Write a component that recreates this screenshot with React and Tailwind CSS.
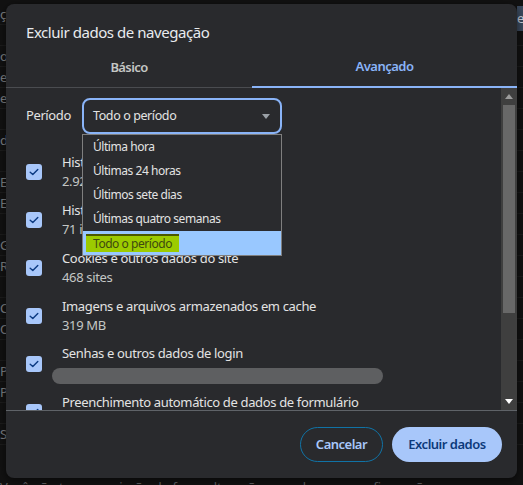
import React from "react";

const font = { fontFamily: '"Noto Sans", "Segoe UI", Arial, sans-serif' };

function Check() {
  return (
    <div className="w-4 h-4 shrink-0 rounded-[3px] bg-[#a8c7fa] flex items-center justify-center">
      <svg width="10" height="8" viewBox="0 0 10 8" fill="none">
        <path d="M1.2 4.2 L3.8 6.6 L8.8 1.4" stroke="#0b3a82" strokeWidth="1.4" strokeLinecap="round" strokeLinejoin="round" />
      </svg>
    </div>
  );
}

function Item({ title, sub, skeleton }) {
  return (
    <div className="flex items-center gap-5 h-[48px]">
      <Check />
      <div className="flex flex-col">
        <div className="text-[13px] leading-[19px] tracking-[-0.35px] text-[#e3e3e3] whitespace-nowrap">{title}</div>
        {sub && <div className="text-[13px] leading-[19px] tracking-[-0.35px] text-[#c4c7c5] whitespace-nowrap">{sub}</div>}
        {skeleton && <div className="ml-[-10px] mt-[5px] w-[331px] h-4 rounded-full bg-[#5e5f61]" />}
      </div>
    </div>
  );
}

export default function App() {
  const bgRows = ["ç", "", "o", "e", "e", "", "d", "", "E", "E", "", "G", "R", "", "C", "O", "", "P", "P", "", "S"];
  return (
    <div className="relative w-[523px] h-[485px] overflow-hidden bg-[#121212]" style={font}>
      {/* background page */}
      <div className="flex flex-col text-[13px] text-[#7d7f82] leading-[21px] pt-[4px]">
        {bgRows.map((r, i) => (
          <div key={i} className="h-[21px] border-b border-[#1c1c1c]">{r}</div>
        ))}
      </div>
      <div className="absolute right-0 top-[6px] w-[6px] h-[25px] bg-[#3b4a5e] text-[13px] text-[#c8d2e0] leading-[25px] overflow-hidden">e</div>
      <div className="absolute left-0 bottom-[-12px] text-[13px] text-[#5f6063] whitespace-nowrap">Você não tem permissão de fazer alterações em algumas configurações</div>

      {/* dialog */}
      <div className="absolute left-[6px] top-[4px] w-[511px] h-[474px] rounded-lg bg-[#292a2d] flex flex-col shadow-[0_2px_8px_rgba(0,0,0,0.6)]">
        <div className="h-[44px] pl-5 pt-[18px] text-[15px] leading-[20px] tracking-[-0.45px] text-[#e8eaed]">Excluir dados de navegação</div>
        <div className="flex h-[40px] border-b border-[#4a4c50]">
          <div className="w-[246px] flex items-center justify-center text-[13px] font-semibold tracking-[-0.6px] text-[#c4c7c5]">Básico</div>
          <div className="flex-1 flex items-center justify-center text-[13px] font-semibold tracking-[-0.5px] text-[#8ab4f8] border-b-2 border-[#8ab4f8] mb-[-1px]">Avançado</div>
        </div>
        <div className="relative flex flex-1 min-h-0 overflow-hidden">
          <div className="flex-1 pl-5 pt-[10px]">
            <div className="flex items-center gap-3">
              <div className="w-[44px] text-[13px] tracking-[-0.4px] text-[#e3e3e3]">Período</div>
              <div className="w-[200px] h-[36px] rounded-lg border-2 border-[#8ab4f8] flex items-center justify-between pl-[9px] pr-[10px]">
                <span className="text-[12.5px] tracking-[-0.4px] text-[#e3e3e3]">Todo o período</span>
                <svg width="8" height="5" viewBox="0 0 8 5"><path d="M0 0 L8 0 L4 5 Z" fill="#9aa0a6" /></svg>
              </div>
            </div>
            <div className="flex flex-col mt-[14px]">
              <Item title="Histórico de navegação" sub="2.926 itens" />
              <Item title="Histórico de downloads" sub="71 itens" />
              <Item title="Cookies e outros dados do site" sub="468 sites" />
              <Item title="Imagens e arquivos armazenados em cache" sub="319 MB" />
              <Item title="Senhas e outros dados de login" skeleton />
              <Item title="Preenchimento automático de dados de formulário" sub="Nenhum" />
            </div>
          </div>
          {/* scrollbar */}
          <div className="w-4 h-full bg-[#3f3f3f] flex flex-col items-center">
            <div className="h-[17px] flex items-center justify-center">
              <svg width="8" height="5" viewBox="0 0 8 5"><path d="M4 0 L8 5 L0 5 Z" fill="#9c9c9c" /></svg>
            </div>
            <div className="w-3 h-[208px] bg-[#686868]" />
            <div className="flex-1" />
            <div className="h-[18px] flex items-center justify-center">
              <svg width="8" height="5" viewBox="0 0 8 5"><path d="M0 0 L8 0 L4 5 Z" fill="#ffffff" /></svg>
            </div>
          </div>
        </div>
        <div className="h-[68px] border-t border-[#5f6368] flex items-center justify-end gap-[9px] pr-[15px]">
          <button className="w-[83px] h-[35px] rounded-full border border-[#1073a6] text-[13px] font-semibold tracking-[-0.5px] text-[#a8c7fa]">Cancelar</button>
          <button className="w-[110px] h-[35px] rounded-full bg-[#a8c7fa] text-[13px] font-semibold tracking-[-0.5px] text-[#0d3a7a]">Excluir dados</button>
        </div>

        {/* native dropdown list */}
        <div className="absolute left-[76px] top-[130px] w-[200px] border border-[#7f7f7f] bg-[#2a2b2e] flex flex-col">
          {["Última hora", "Últimas 24 horas", "Últimos sete dias", "Últimas quatro semanas"].map((t) => (
            <div key={t} className="h-6 flex items-center pl-[10px] text-[12px] tracking-[-0.45px] text-[#e3e3e3]">{t}</div>
          ))}
          <div className="h-6 flex items-center bg-[#99c8ff] pl-[3px]">
            <span className="h-[18px] pl-[7px] pr-[7px] flex items-center bg-[#9ccb00] border-t-2 border-[#4b5800] text-[12px] tracking-[-0.45px] text-[#3e4a10]">Todo o período</span>
          </div>
        </div>
      </div>
    </div>
  );
}
